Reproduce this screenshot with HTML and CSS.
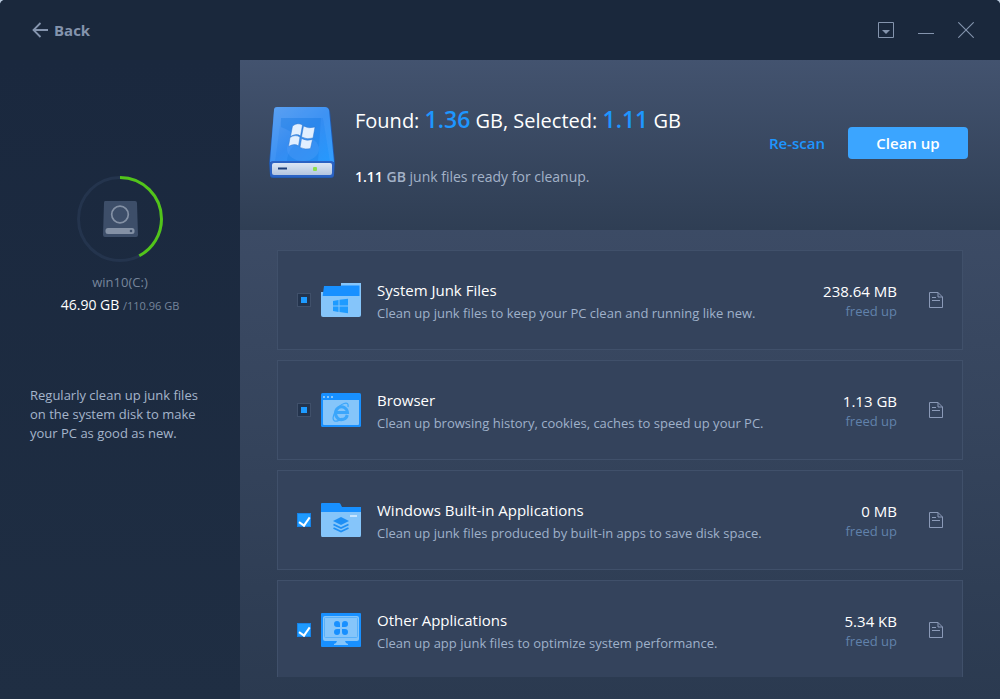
FILE: index.html
```html
<!DOCTYPE html>
<html lang="en">
<head>
<meta charset="utf-8">
<meta name="viewport" content="width=device-width, initial-scale=1">
<title>Junk cleanup</title>
<link rel="stylesheet" href="styles.css">
</head>
<body>
<svg class="defs" aria-hidden="true">
  <symbol id="doc" viewBox="0 0 14 16">
    <path d="M.5.5h8.500l4.500 4.500v10.500H.5z M9 .5V5h4.500" fill="none" stroke="currentColor"/>
    <path d="M3 5.500h4M3 8.500h8" fill="none" stroke="currentColor"/>
  </symbol>
</svg>
<div class="app">
  <header class="titlebar">
    <button class="back" type="button">
      <svg width="16" height="16" viewBox="0 0 16 16" aria-hidden="true"><path d="M8.500 1 1.500 8l7 7M1.500 8H16" fill="none" stroke="currentColor" stroke-width="1.800"/></svg>
      Back
    </button>
    <div class="window-controls">
      <button type="button" aria-label="Menu"><svg width="16" height="16" viewBox="0 0 16 16"><path d="M.5.5h15v15H.5z" fill="none" stroke="currentColor"/><path d="M4 8h8l-4 4z" fill="currentColor"/></svg></button>
      <button type="button" aria-label="Minimize"><svg width="16" height="16" viewBox="0 0 16 16"><path d="M0 11.500h16" stroke="currentColor"/></svg></button>
      <button type="button" aria-label="Close"><svg width="16" height="16" viewBox="0 0 16 16"><path d="m.3.3 15.400 15.400M15.700.3.3 15.700" stroke="currentColor" stroke-width="1.100"/></svg></button>
    </div>
  </header>

  <aside class="sidebar">
    <section class="disk">
      <svg width="86" height="86" viewBox="0 0 86 86" aria-hidden="true">
        <circle cx="43" cy="43" r="41.500" fill="none" stroke="#24344d" stroke-width="3"/>
        <circle cx="43" cy="43" r="41.500" fill="none" stroke="#52c41a" stroke-width="3" pathLength="100" stroke-dasharray="42.300 100" transform="rotate(-90 43 43)"/>
        <path d="M28 25h30q2 0 2 2l1 32q0 2-2 2H28q-2 0-2-2l1-32q0-2 1-2z" fill="#3d4e69"/>
        <circle cx="43" cy="38.500" r="8.300" fill="none" stroke="#8491a5" stroke-width="1.700"/>
        <rect x="28.500" y="52" width="29" height="6" rx="2.500" fill="#8491a5"/>
        <circle cx="54" cy="55" r="1.300" fill="#3d4e69"/>
      </svg>
      <h2 class="disk-name">win10(C:)</h2>
      <p class="disk-usage">46.90 GB <span>/110.96 GB</span></p>
    </section>
    <p class="tip">Regularly clean up junk files on the system disk to make your PC as good as new.</p>
  </aside>

  <main class="content">
    <section class="summary">
      <svg class="drive" width="66" height="72" viewBox="0 0 66 72" aria-hidden="true">
        <defs>
          <linearGradient id="driveTop" x1="0" y1="0" x2="1" y2="1"><stop offset="0" stop-color="#5a9dee"/><stop offset=".5" stop-color="#358cf1"/><stop offset="1" stop-color="#249aff"/></linearGradient>
          <linearGradient id="driveFront" x1="0" y1="0" x2="0" y2="1"><stop offset="0" stop-color="#dbe6f4"/><stop offset="1" stop-color="#b3c5df"/></linearGradient>
        </defs>
        <path d="M8 1h50q2 0 3 3l5 52-1 12q0 3-3 3H4q-3 0-3-3L0 56 5 4q0-3 3-3z" fill="#215aaf"/>
        <path d="M8 0h48q3 0 4 3l5 52H1L5 3q0-3 3-3z" fill="url(#driveTop)"/>
        <path d="M5 4 1 55h5L12 11h42l7 44h4L60 3q-1-3-4-3H8Q5 0 5 4z" fill="#66adff" opacity=".2"/>
        <path d="M12 11h40l-3 43H18q1-14 15-21-10-9-21-13z" fill="#1f7fe6" opacity=".4"/>
        <ellipse cx="34" cy="42" rx="16" ry="12" fill="#62a8ff" opacity=".25"/>
        <rect x="1" y="54" width="64" height="16" rx="3" fill="#2b62c3"/>
        <rect x="3" y="56" width="60" height="12" rx="2" fill="url(#driveFront)"/>
        <path d="M9 61.500h9" stroke="#1b3d79" stroke-width="2"/>
        <rect x="44" y="60" width="4" height="4" rx="1" fill="#8bdf4d"/>
        <g fill="#e2efff" stroke="#2a74ce" stroke-width=".5">
          <path d="M23.500 19q5-4 10-1l-2 11q-4-3-10 .5z"/>
          <path d="M34.500 19q5 3 11.500 1l-2 11q-6 2-11.500-1z"/>
          <path d="M21 30.500q5-3.500 10-.5l-1.500 9q-4-3-10 .5z"/>
          <path d="M32.500 31.500q5 3 11 1l-2 9q-5 1.500-10.500-1z"/>
        </g>
      </svg>
      <div class="summary-text">
        <h1>Found: <b>1.36</b> GB, Selected: <b>1.11</b> GB</h1>
        <p><strong>1.11</strong> <b>GB</b> junk files ready for cleanup.</p>
      </div>
      <div class="summary-actions">
        <button class="rescan" type="button">Re-scan</button>
        <button class="cleanup" type="button">Clean up</button>
      </div>
    </section>

    <section class="list">
      <ul class="cards">
        <li class="card">
          <input class="check partial" id="system" type="checkbox" aria-checked="mixed">
          <svg class="card-icon" width="40" height="34" viewBox="0 0 40 34" aria-hidden="true">
            <path d="M20 0h20v14H20z" fill="#85c5fa"/>
            <path d="M0 9h4v6H0z" fill="#85c5fa"/>
            <path d="M3 3h16l1.500-.5H38.500V14H1.500z" fill="#1890ff"/>
            <path d="M0 13h40v19q0 2-2 2H2q-2 0-2-2z" fill="#85c5fa"/>
            <path d="m12 18 5.500-1v5.500H12zM18.500 16.800 27 15.800v6.700h-8.500zM12 23.500h5.500V29l-5.500-1zM18.500 23.500H27v6.800l-8.500-1.200z" fill="#1e9bff"/>
          </svg>
          <label class="card-text" for="system"><span class="card-title">System Junk Files</span><span class="card-note">Clean up junk files to keep your PC clean and running like new.</span></label>
          <p class="card-size">238.64 MB <span>freed up</span></p>
          <button class="details" type="button" aria-label="System Junk Files details"><svg width="14" height="16"><use href="#doc"/></svg></button>
        </li>
        <li class="card">
          <input class="check partial" id="browser" type="checkbox" aria-checked="mixed">
          <svg class="card-icon" width="40" height="34" viewBox="0 0 40 34" aria-hidden="true">
            <rect width="40" height="34" rx="1.500" fill="#1890ff"/>
            <path d="M2 7h36v24q0 1-1 1H3q-1 0-1-1z" fill="#85c5fa"/>
            <path d="M2 3h2v2H2zM6 3h2v2H6zM10 3h2v2h-2z" fill="#85c5fa"/>
            <path d="M26.300 22A6 6.500 0 1 1 26.500 19.500H15" fill="none" stroke="#3ba6fb" stroke-width="3"/>
            <path d="M27 14q1-5-4-3.500-5 1.500-9 8.500-3.500 7-.5 9 3 1 8-3" fill="none" stroke="#3ba6fb" stroke-width="1.300"/>
          </svg>
          <label class="card-text" for="browser"><span class="card-title">Browser</span><span class="card-note">Clean up browsing history, cookies, caches to speed up your PC.</span></label>
          <p class="card-size">1.13 GB <span>freed up</span></p>
          <button class="details" type="button" aria-label="Browser details"><svg width="14" height="16"><use href="#doc"/></svg></button>
        </li>
        <li class="card">
          <input class="check" id="builtin" type="checkbox" checked>
          <svg class="card-icon" width="40" height="34" viewBox="0 0 40 34" aria-hidden="true">
            <path d="M1 0h17q1 0 1.500 1L21 4h19v8H0V1q0-1 1-1z" fill="#1890ff"/>
            <path d="M0 9h40v23q0 2-1 2H1q-1 0-1-2z" fill="#85c5fa"/>
            <path d="M29 13h7" stroke="#d7edff" stroke-width="1.600"/>
            <path d="m20 14 8 4-8 4-8-4z" fill="#1e8ff5"/>
            <path d="m12.500 21.500 7.500 3.500 7.500-3.500M12.500 25l7.500 3.500 7.500-3.500" fill="none" stroke="#1e8ff5" stroke-width="1.700"/>
          </svg>
          <label class="card-text" for="builtin"><span class="card-title">Windows Built-in Applications</span><span class="card-note">Clean up junk files produced by built-in apps to save disk space.</span></label>
          <p class="card-size">0 MB <span>freed up</span></p>
          <button class="details" type="button" aria-label="Windows Built-in Applications details"><svg width="14" height="16"><use href="#doc"/></svg></button>
        </li>
        <li class="card">
          <input class="check" id="other" type="checkbox" checked>
          <svg class="card-icon" width="40" height="34" viewBox="0 0 40 34" aria-hidden="true">
            <rect width="40" height="34" rx="1" fill="#1890ff"/>
            <rect x="2" y="3" width="36" height="25" rx="2" fill="#85c5fa"/>
            <rect x="3.500" y="4.500" width="33" height="20" rx="1" fill="none" stroke="#58b0f9"/>
            <path d="M16 28h8l1 2 2 1v1H13v-1l2-1z" fill="#85c5fa"/>
            <path d="M19 14h-3a3 3 0 1 1 3-3zM21 14h3a3 3 0 1 0-3-3zM19 16h-3a3 3 0 1 0 3 3zM21 16h3a3 3 0 1 1-3 3z" fill="#1890ff"/>
          </svg>
          <label class="card-text" for="other"><span class="card-title">Other Applications</span><span class="card-note">Clean up app junk files to optimize system performance.</span></label>
          <p class="card-size">5.34 KB <span>freed up</span></p>
          <button class="details" type="button" aria-label="Other Applications details"><svg width="14" height="16"><use href="#doc"/></svg></button>
        </li>
      </ul>
    </section>
  </main>
</div>
</body>
</html>
```
FILE: styles.css
```css
* {
  box-sizing: border-box;
}

body {
  margin: 0;
  background: #b9c9dc;
  color: #fff;
  font-family: "Open Sans", "Noto Sans", sans-serif;
  font-size: 13px;
}

h1, h2, p, ul {
  margin: 0;
  padding: 0;
  font-weight: 400;
}

button {
  padding: 0;
  border: 0;
  background: none;
  color: inherit;
  font: inherit;
  cursor: pointer;
}

svg {
  display: block;
  flex: none;
}

.defs {
  display: none;
}

.app {
  display: grid;
  grid-template: 60px minmax(0, 1fr) / 240px minmax(0, 1fr);
  height: 100vh;
  overflow: hidden;
  border-radius: 5px 5px 0 0;
  background: #1b293f;
}

.titlebar {
  grid-column: 1 / -1;
  display: flex;
  align-items: center;
  justify-content: space-between;
  padding: 0 26px 0 32px;
  background: #1a283c;
  color: #8494ad;
}

.back {
  display: flex;
  align-items: center;
  gap: 6px;
  font-size: 15px;
  font-weight: 700;
  line-height: 20px;
}

.window-controls {
  display: flex;
  gap: 24px;
}

.sidebar {
  padding: 116px 30px 0;
  background: linear-gradient(#1a283e, #1f2e43);
}

.disk {
  display: flex;
  flex-direction: column;
  align-items: center;
}

.disk-name {
  margin-top: 10px;
  color: #76859b;
  font-size: 13px;
  line-height: 20px;
}

.disk-usage {
  margin-top: 3px;
  font-size: 14px;
  line-height: 20px;
  white-space: nowrap;
}

.disk-usage span {
  color: #76859b;
  font-size: 11px;
}

.tip {
  margin-top: 70px;
  color: #a5b5cb;
  line-height: 19px;
}

.content {
  display: flex;
  flex-direction: column;
  min-height: 0;
}

.summary {
  display: flex;
  align-items: center;
  height: 170px;
  flex: none;
  padding: 0 32px 4px 29px;
  background: linear-gradient(#43536f, #2f3e54);
}

.summary-text {
  margin-left: 20px;
  padding-top: 4px;
  white-space: nowrap;
}

.summary h1 {
  font-size: 20px;
  line-height: 32px;
}

.summary h1 b {
  color: #1e96ff;
  font-size: 23px;
  font-weight: 600;
}

.summary p {
  margin-top: 30px;
  color: #a3b2c8;
  font-size: 14px;
  line-height: 20px;
}

.summary p strong {
  color: #fff;
  font-weight: 600;
}

.summary p b {
  font-weight: 600;
}

.summary-actions {
  display: flex;
  align-items: center;
  gap: 23px;
  margin-left: auto;
  font-size: 15px;
  font-weight: 600;
}

.rescan {
  color: #1e96ff;
}

.cleanup {
  width: 120px;
  height: 32px;
  border-radius: 4px;
  background: #3ba5ff;
}

.list {
  flex: 1;
  min-height: 0;
  padding: 20px 37px 22px;
  background: linear-gradient(#3c4b65, #2b3a50);
}

.cards {
  display: flex;
  flex-direction: column;
  gap: 10px;
  height: 100%;
  overflow-y: auto;
  scrollbar-width: none;
  list-style: none;
}

.card {
  display: flex;
  align-items: center;
  flex: none;
  height: 100px;
  padding: 0 19px;
  border: 1px solid #40506a;
  background: #34435c;
}

.check {
  appearance: none;
  width: 14px;
  height: 14px;
  margin: 0 10px 0 0;
  flex: none;
  border: 1px solid #40506a;
  background: #23334c;
}

.check.partial {
  background: linear-gradient(#1e9bff, #1e9bff) center / 6px 6px no-repeat #23334c;
}

.check:checked {
  display: flex;
  align-items: flex-start;
  justify-content: center;
  border-color: #1783e8;
  background: #1e9bff;
}

.check:checked::before {
  content: "";
  width: 5px;
  height: 9px;
  margin-top: 1px;
  border: solid #fff;
  border-width: 0 2px 2px 0;
  transform: rotate(35deg);
}

.card-text {
  display: flex;
  flex-direction: column;
  gap: 3px;
  flex: 1;
  margin-left: 16px;
  padding-top: 2px;
}

.card-title {
  font-size: 15px;
  line-height: 20px;
}

.card-note {
  color: #9fb1ca;
  line-height: 20px;
}

.card-size {
  padding-top: 2px;
  font-size: 15px;
  line-height: 20px;
  text-align: right;
}

.card-size span {
  display: block;
  color: #6182ab;
  font-size: 13px;
}

.details {
  margin-left: 32px;
  color: #8b9ab8;
}
```
